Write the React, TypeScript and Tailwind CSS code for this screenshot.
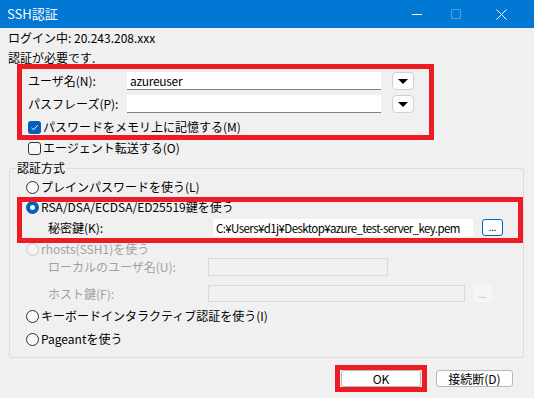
import React from "react";

const font = "font-['Noto_Sans_CJK_JP','Noto_Sans',sans-serif]";

function Check({ checked }: { checked?: boolean }) {
  if (checked) {
    return (
      <span className="flex size-[13px] shrink-0 items-center justify-center rounded-[3px] bg-[#005fb8]">
        <svg width="9" height="9" viewBox="0 0 9 9" fill="none">
          <path d="M1.5 4.8 L3.6 6.8 L7.6 2.2" stroke="white" strokeWidth="1" />
        </svg>
      </span>
    );
  }
  return <span className="size-[13px] shrink-0 rounded-[3px] border border-[#333] bg-[#f7f7f7]" />;
}

function Radio({ checked, disabled }: { checked?: boolean; disabled?: boolean }) {
  if (checked) {
    return (
      <span className="flex size-[13px] shrink-0 items-center justify-center rounded-full bg-[#005fb8]">
        <span className="size-[5px] rounded-full bg-white" />
      </span>
    );
  }
  return (
    <span
      className={
        disabled
          ? "size-[13px] shrink-0 rounded-full border border-[#c8c8c8] bg-[#f3f3f3]"
          : "size-[13px] shrink-0 rounded-full border border-[#333] bg-[#f7f7f7]"
      }
    />
  );
}

function DropButton() {
  return (
    <button className="ml-[11px] flex h-[18px] w-[22px] items-center justify-center rounded-[4px] border border-[#d0d0d0] bg-[#fdfdfd]">
      <svg width="10" height="5" viewBox="0 0 10 5">
        <path d="M0 0 H10 L5 5 Z" fill="black" />
      </svg>
    </button>
  );
}

export default function App() {
  return (
    <div className={`relative h-[398px] w-[534px] overflow-hidden bg-[#f0f0f0] text-[12px] leading-[14px] text-black ${font}`}>
      {/* title bar */}
      <div className="flex h-[28px] items-center bg-[#0078d4] text-white">
        <span className="ml-[7px] text-[13px]">SSH認証</span>
        <div className="ml-auto flex h-full items-center">
          <span className="mr-[29px] h-px w-[10px] bg-white" />
          <span className="mr-[35px] size-[10px] rounded-[1px] border border-white/30" />
          <svg className="mr-[27px]" width="11" height="11" viewBox="0 0 11 11">
            <path d="M0.5 0.5 L10.5 10.5 M10.5 0.5 L0.5 10.5" stroke="white" strokeWidth="1" />
          </svg>
        </div>
      </div>

      <div className="px-[8px]">
        <div className="mt-[3px] flex h-[14px] items-center">ログイン中: 20.243.208.xxx</div>
        <div className="mt-[6px] flex h-[14px] items-center">認証が必要です.</div>

        {/* user / passphrase */}
        <div className="ml-[20px] mt-[7px] flex h-[18px] items-center">
          <span className="w-[99px]">ユーザ名(N):</span>
          <div className="flex h-[18px] w-[254px] items-center border-b border-[#808080] bg-white pl-[3px] tracking-[-0.3px]">azureuser</div>
          <DropButton />
        </div>
        <div className="ml-[20px] mt-[5px] flex h-[18px] items-center">
          <span className="w-[99px]">パスフレーズ(P):</span>
          <div className="h-[18px] w-[254px] border-b border-[#808080] bg-white" />
          <DropButton />
        </div>
        <div className="ml-[20px] mt-[7px] flex h-[14px] items-center gap-[2px]">
          <Check checked />
          <span>パスワードをメモリ上に記憶する(M)</span>
        </div>
        <div className="ml-[20px] mt-[7px] flex h-[14px] items-center gap-[2px]">
          <Check />
          <span>エージェント転送する(O)</span>
        </div>

        {/* group box */}
        <div className="relative ml-[1px] mt-[13px] h-[190px] w-[515px] rounded-[2px] border border-[#dcdcdc]">
          <span className="absolute left-[6px] top-[-8px] bg-[#f0f0f0] px-[1px]">認証方式</span>
          <div className="pl-[16px] pt-[11px]">
            <div className="flex h-[14px] items-center gap-[2px]">
              <Radio />
              <span>プレインパスワードを使う(L)</span>
            </div>
            <div className="mt-[6px] flex h-[14px] items-center gap-[2px]">
              <Radio checked />
              <span>RSA/DSA/ECDSA/ED25519鍵を使う</span>
            </div>
            <div className="mt-[5px] flex h-[17px] items-center">
              <span className="ml-[22px] w-[165px]">秘密鍵(K):</span>
              <div className="flex h-[17px] w-[260px] items-center overflow-hidden whitespace-nowrap bg-white pl-[3px] text-[11.5px] tracking-[-0.6px]">
                C:¥Users¥d1j¥Desktop¥azure_test-server_key.pem
              </div>
              <button className="ml-[9px] flex h-[17px] w-[21px] items-end justify-center rounded-[3px] border border-[#0067c0] bg-[#fdfdfd] pb-[3px] text-[9px] leading-[9px]">
                ...
              </button>
            </div>
            <div className="mt-[6px] flex h-[14px] items-center gap-[2px] text-[#a0a0a0]">
              <Radio disabled />
              <span>rhosts(SSH1)を使う</span>
            </div>
            <div className="mt-[2px] flex h-[18px] items-center text-[#a0a0a0]">
              <span className="ml-[22px] w-[160px]">ローカルのユーザ名(U):</span>
              <div className="h-[18px] w-[180px] border border-[#dadada]" />
            </div>
            <div className="mt-[9px] flex h-[17px] items-center text-[#a0a0a0]">
              <span className="ml-[22px] w-[160px]">ホスト鍵(F):</span>
              <div className="h-[17px] w-[257px] border border-[#dadada]" />
              <button className="ml-[8px] flex h-[17px] w-[19px] items-end justify-center rounded-[3px] bg-[#f5f5f5] pb-[3px] text-[9px] leading-[9px] text-[#a0a0a0]">
                ...
              </button>
            </div>
            <div className="mt-[7px] flex h-[14px] items-center gap-[2px]">
              <Radio />
              <span>キーボードインタラクティブ認証を使う(I)</span>
            </div>
            <div className="mt-[9px] flex h-[14px] items-center gap-[2px]">
              <Radio />
              <span>Pageantを使う</span>
            </div>
          </div>
        </div>

        <div className="mt-[12px] flex justify-end gap-[15px] pr-[13px]">
          <button className="flex h-[17px] w-[80px] items-center justify-center rounded-[3px] border border-[#b8b8b8] bg-[#fdfdfd]">
            OK
          </button>
          <button className="flex h-[17px] w-[77px] items-center justify-center rounded-[3px] border border-[#b8b8b8] bg-[#fdfdfd]">
            接続断(D)
          </button>
        </div>
      </div>

      {/* red annotation boxes */}
      <div className="pointer-events-none absolute left-[17px] top-[64px] h-[76px] w-[417px] border-[5px] border-[#ed1c24]" />
      <div className="pointer-events-none absolute left-[17px] top-[197px] h-[46px] w-[506px] border-[5px] border-[#ed1c24]" />
      <div className="pointer-events-none absolute left-[335px] top-[365px] h-[27px] w-[92px] border-[5px] border-[#ed1c24]" />
    </div>
  );
}
